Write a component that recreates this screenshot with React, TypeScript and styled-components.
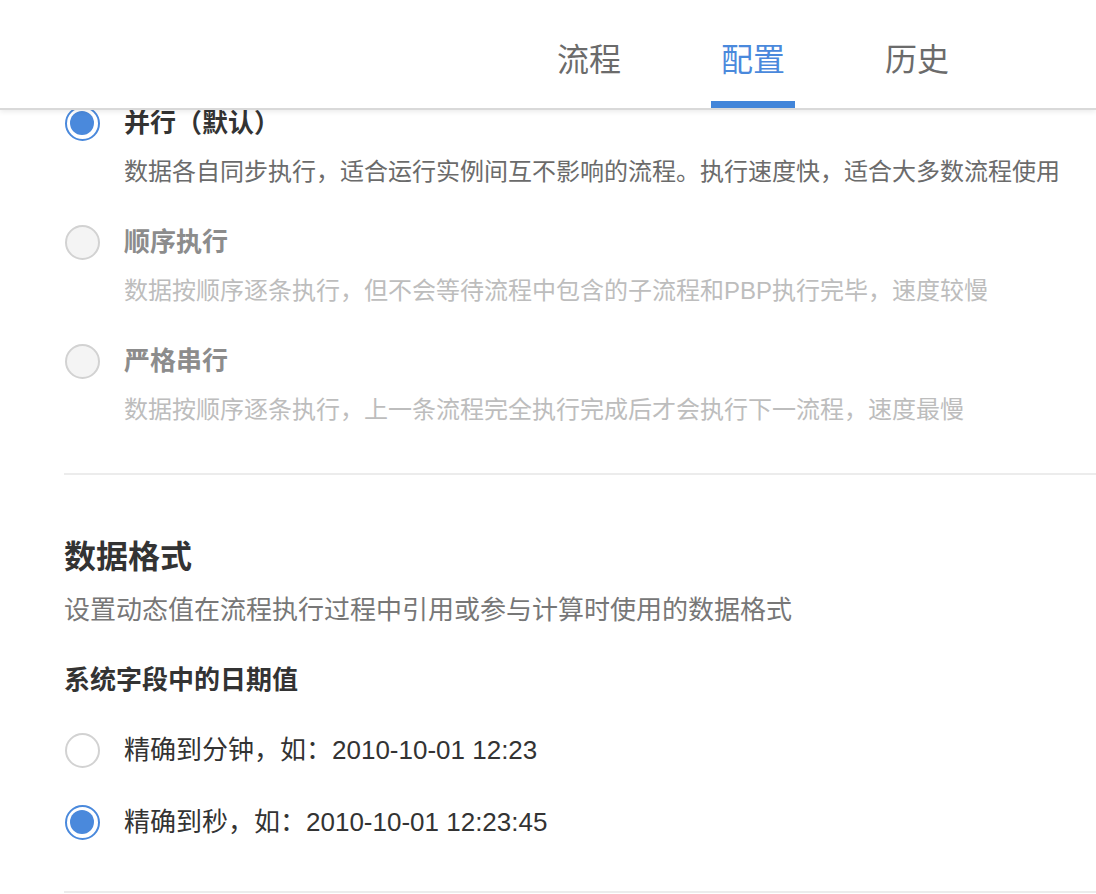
import React from "react";
import styled, { createGlobalStyle } from "styled-components";

const GlobalStyle = createGlobalStyle`
  html, body {
    margin: 0;
    padding: 0;
    background: #ffffff;
    font-family: "Liberation Sans", "Noto Sans CJK SC", sans-serif;
    -webkit-font-smoothing: antialiased;
  }
  * { box-sizing: border-box; }
`;

const Page = styled.div`
  position: relative;
  width: 1096px;
  height: 894px;
  overflow: hidden;
  background: #fff;
`;

const Header = styled.header`
  position: absolute;
  top: 0;
  left: 0;
  right: 0;
  height: 110px;
  background: #fff;
  border-bottom: 2px solid #d9d9d9;
  box-shadow: 0 2px 5px rgba(0, 0, 0, 0.08);
  display: flex;
  justify-content: flex-end;
  padding-right: 97px;
  z-index: 2;
`;

const Tab = styled.div<{ $active?: boolean }>`
  position: relative;
  width: 164px;
  height: 108px;
  display: flex;
  align-items: center;
  justify-content: center;
  padding-top: 6px;
  font-size: 32px;
  color: ${(p) => (p.$active ? "#4a89dc" : "#6b6b6b")};
  &::after {
    content: "";
    display: ${(p) => (p.$active ? "block" : "none")};
    position: absolute;
    left: 40px;
    right: 40px;
    bottom: 0;
    height: 7px;
    background: #4285d9;
  }
`;

const Content = styled.main`
  padding: 105px 0 0 64px;
  display: flex;
  flex-direction: column;
`;

const OptionList = styled.div`
  display: flex;
  flex-direction: column;
  gap: 34px;
`;

const OptionRow = styled.div`
  display: flex;
  align-items: flex-start;
  gap: 24px;
`;

const RadioBox = styled.div`
  width: 36px;
  height: 36px;
  display: flex;
  align-items: center;
  justify-content: center;
  flex: none;
`;

const Radio = styled.span<{ $checked?: boolean; $disabled?: boolean }>`
  width: 35px;
  height: 35px;
  border-radius: 50%;
  border: 2px solid ${(p) => (p.$checked ? "#4a89dc" : "#d2d2d2")};
  background: ${(p) => (p.$disabled ? "#f4f4f4" : "#fff")};
  display: flex;
  align-items: center;
  justify-content: center;
  &::after {
    content: "";
    display: ${(p) => (p.$checked ? "block" : "none")};
    width: 24px;
    height: 24px;
    border-radius: 50%;
    background: #4a89dc;
  }
`;

const TextCol = styled.div`
  display: flex;
  flex-direction: column;
  gap: 13px;
`;

const OptionLabel = styled.div<{ $disabled?: boolean }>`
  font-size: 26px;
  line-height: 36px;
  font-weight: 700;
  color: ${(p) => (p.$disabled ? "#8c8c8c" : "#333")};
`;

const OptionDesc = styled.div<{ $disabled?: boolean }>`
  font-size: 24px;
  line-height: 36px;
  color: ${(p) => (p.$disabled ? "#bdbdbd" : "#6b6b6b")};
  white-space: nowrap;
`;

const Divider = styled.div<{ $top: number }>`
  height: 2px;
  background: #ececec;
  margin-top: ${(p) => p.$top}px;
`;

const Heading = styled.h2`
  margin: 60px 0 0;
  font-size: 32px;
  line-height: 44px;
  font-weight: 700;
  color: #333;
`;

const Subtitle = styled.p`
  margin: 13px 0 0;
  font-size: 26px;
  line-height: 36px;
  color: #777;
`;

const SubHeading = styled.h3`
  margin: 34px 0 34px;
  font-size: 26px;
  line-height: 36px;
  font-weight: 700;
  color: #333;
`;

const DateList = styled.div`
  display: flex;
  flex-direction: column;
  gap: 36px;
`;

const DateLabel = styled.div`
  font-size: 26px;
  line-height: 36px;
  color: #333;
`;

const modes = [
  {
    label: "并行（默认）",
    desc: "数据各自同步执行，适合运行实例间互不影响的流程。执行速度快，适合大多数流程使用",
    checked: true,
    disabled: false,
  },
  {
    label: "顺序执行",
    desc: "数据按顺序逐条执行，但不会等待流程中包含的子流程和PBP执行完毕，速度较慢",
    checked: false,
    disabled: true,
  },
  {
    label: "严格串行",
    desc: "数据按顺序逐条执行，上一条流程完全执行完成后才会执行下一流程，速度最慢",
    checked: false,
    disabled: true,
  },
];

const dates = [
  { label: "精确到分钟，如：2010-10-01 12:23", checked: false },
  { label: "精确到秒，如：2010-10-01 12:23:45", checked: true },
];

export default function App() {
  return (
    <Page>
      <GlobalStyle />
      <Header>
        <Tab>流程</Tab>
        <Tab $active>配置</Tab>
        <Tab>历史</Tab>
      </Header>
      <Content>
        <OptionList>
          {modes.map((m) => (
            <OptionRow key={m.label}>
              <RadioBox>
                <Radio $checked={m.checked} $disabled={m.disabled} />
              </RadioBox>
              <TextCol>
                <OptionLabel $disabled={m.disabled}>{m.label}</OptionLabel>
                <OptionDesc $disabled={m.disabled}>{m.desc}</OptionDesc>
              </TextCol>
            </OptionRow>
          ))}
        </OptionList>
        <Divider $top={45} />
        <Heading>数据格式</Heading>
        <Subtitle>设置动态值在流程执行过程中引用或参与计算时使用的数据格式</Subtitle>
        <SubHeading>系统字段中的日期值</SubHeading>
        <DateList>
          {dates.map((d) => (
            <OptionRow key={d.label}>
              <RadioBox>
                <Radio $checked={d.checked} />
              </RadioBox>
              <DateLabel>{d.label}</DateLabel>
            </OptionRow>
          ))}
        </DateList>
        <Divider $top={51} />
      </Content>
    </Page>
  );
}
